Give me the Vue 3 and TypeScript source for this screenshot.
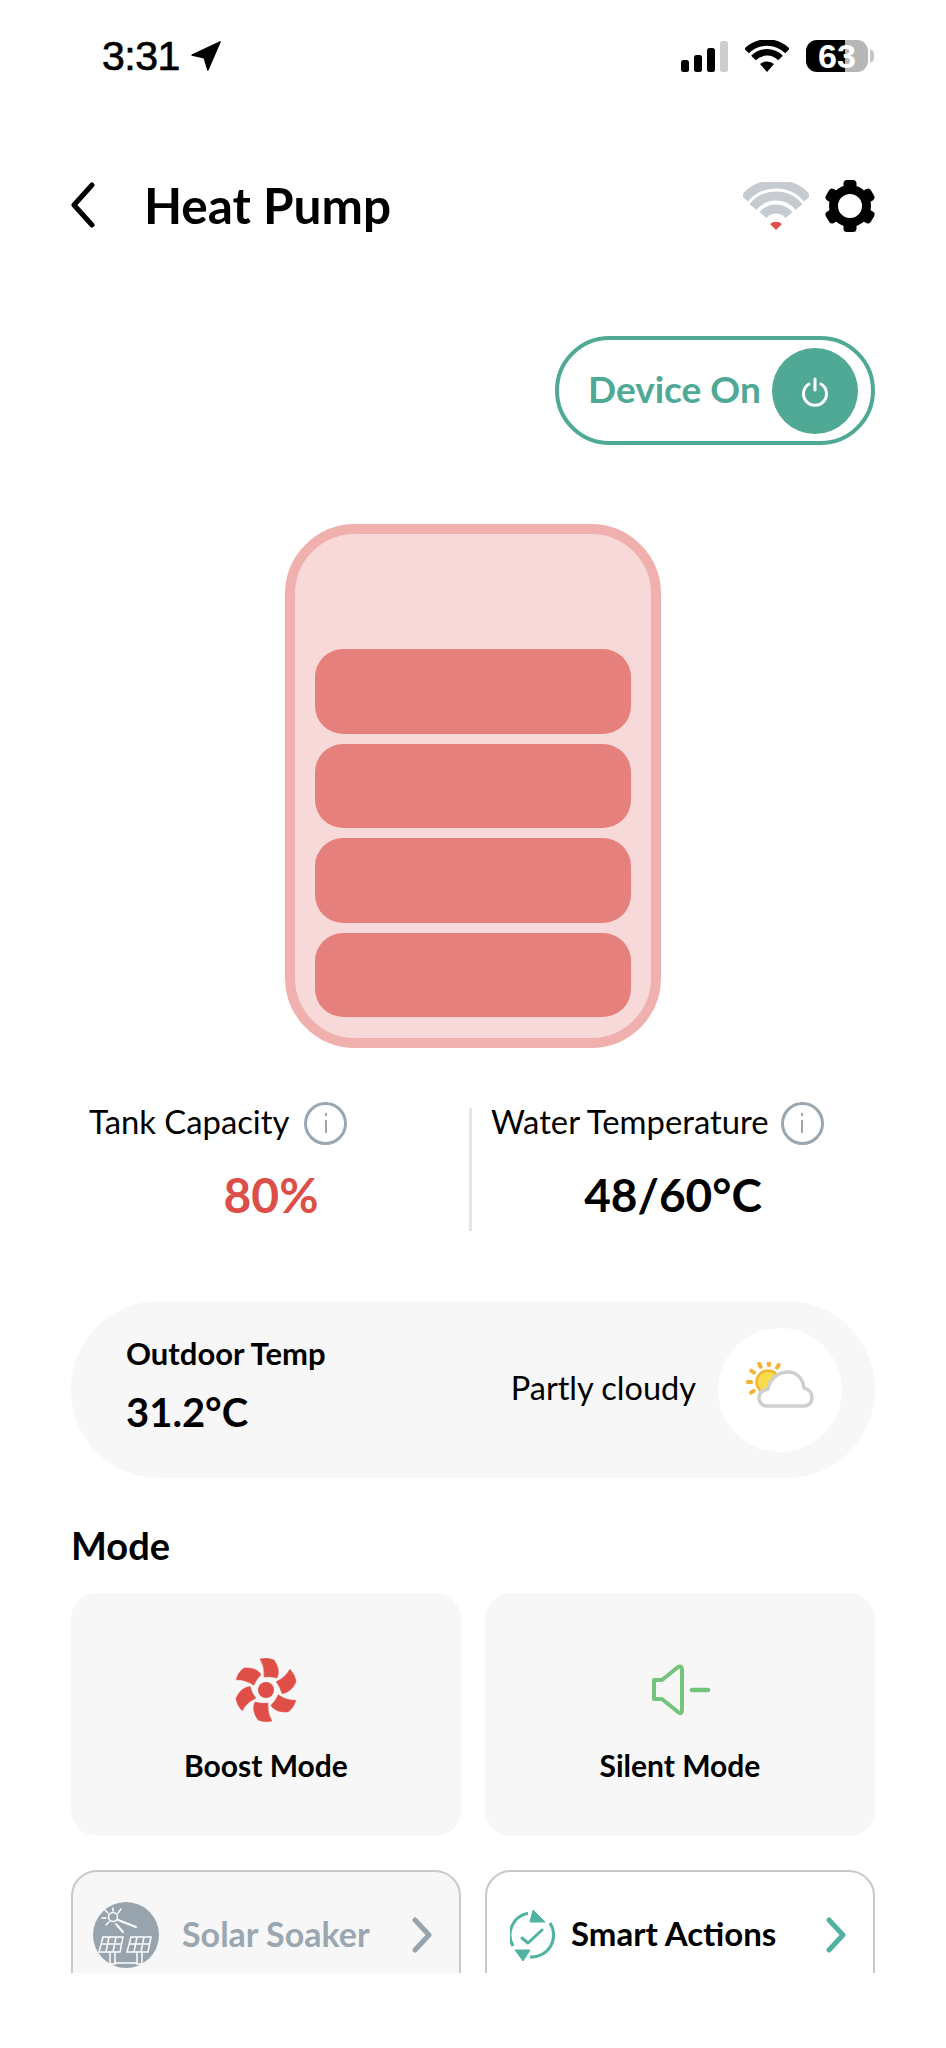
<script setup lang="ts">
const tankBars = [1, 2, 3, 4];
const gearAngles = [0, 60, 120, 180, 240, 300];
const fanAngles = [0, 60, 120, 180, 240, 300];
const sunRays = [-122, -90, -56, -26, 3, 32];
</script>

<template>
  <div class="page">
    <div class="status">
      <div class="status-left">
        <span class="time">3:31</span>
        <svg class="loc" width="30" height="32" viewBox="0 0 32 32">
          <path d="M31 1 L1 15 L14 18 L18 31 Z" fill="#000" stroke="#000" stroke-width="1.5" stroke-linejoin="round" />
        </svg>
      </div>
      <div class="status-right">
        <div class="signal">
          <i class="b1"></i><i class="b2"></i><i class="b3"></i><i class="b4"></i>
        </div>
        <svg width="44" height="32" viewBox="0 0 44 32">
          <path d="M1.5 11 A29 29 0 0 1 42.500 11" fill="none" stroke="#000" stroke-width="6.500" />
          <path d="M8.500 18 A19 19 0 0 1 35.500 18" fill="none" stroke="#000" stroke-width="6.500" />
          <path d="M15 24 L22 32 L29 24 A11 11 0 0 0 15 24 Z" fill="#000" />
        </svg>
        <div class="battery-wrap">
          <div class="battery">63</div>
          <div class="battery-cap"></div>
        </div>
      </div>
    </div>

    <div class="header">
      <svg class="back" width="24" height="46" viewBox="0 0 24 46">
        <path d="M21 3 L3 23 L21 43" fill="none" stroke="#000" stroke-width="5" stroke-linecap="round" stroke-linejoin="round" />
      </svg>
      <h1 class="title">Heat Pump</h1>
      <svg class="wifi" width="66" height="48" viewBox="0 0 66 48">
        <path d="M1.500 16.500 A41.500 41.500 0 0 1 64.500 16.500" fill="none" stroke="#c5cbd1" stroke-width="9" />
        <path d="M10 25 A29.500 29.500 0 0 1 56 25" fill="none" stroke="#c5cbd1" stroke-width="9" />
        <path d="M20 33 A17 17 0 0 1 46 33" fill="none" stroke="#c5cbd1" stroke-width="9" />
        <path d="M27 42 A9 9 0 0 1 39 42 L33 48 Z" fill="#e0504a" />
      </svg>
      <svg class="gear" width="52" height="52" viewBox="-26 -26 52 52">
        <circle r="16.500" fill="none" stroke="#000" stroke-width="9" />
        <rect
          v-for="a in gearAngles"
          :key="a"
          x="-6.500"
          y="-26"
          width="13"
          height="12"
          rx="3.500"
          fill="#000"
          :transform="`rotate(${a})`"
        />
      </svg>
    </div>

    <div class="toggle-row">
      <div class="toggle">
        <span class="toggle-label">Device On</span>
        <div class="knob">
          <svg width="32" height="32" viewBox="0 0 32 32">
            <path d="M10 9 A11.500 11.500 0 1 0 22 9" fill="none" stroke="#fff" stroke-width="3" stroke-linecap="round" />
            <path d="M16 4 V15" fill="none" stroke="#fff" stroke-width="3" stroke-linecap="round" />
          </svg>
        </div>
      </div>
    </div>

    <div class="tank">
      <div v-for="b in tankBars" :key="b" class="tank-bar"></div>
    </div>

    <div class="stats">
      <div class="stat">
        <div class="stat-head wide-gap">
          <span>Tank Capacity</span>
          <span class="info"><i></i></span>
        </div>
        <div class="stat-value red">80%</div>
      </div>
      <div class="divider"></div>
      <div class="stat">
        <div class="stat-head">
          <span>Water Temperature</span>
          <span class="info"><i></i></span>
        </div>
        <div class="stat-value">48/60°C</div>
      </div>
    </div>

    <div class="outdoor">
      <div class="outdoor-left">
        <div class="outdoor-label">Outdoor Temp</div>
        <div class="outdoor-temp">31.2°C</div>
      </div>
      <div class="outdoor-right">
        <span class="outdoor-desc">Partly cloudy</span>
        <div class="weather-circle">
          <svg width="72" height="56" viewBox="0 0 72 56">
            <g transform="translate(24 20)">
              <rect
                v-for="r in sunRays"
                :key="r"
                x="-2"
                y="-22"
                width="4"
                height="7"
                rx="1.500"
                fill="#f5b335"
                :transform="`rotate(${r})`"
              />
              <circle r="11.500" fill="#f9dc4c" stroke="#f5b335" stroke-width="2.500" />
            </g>
            <path
              d="M23 44 C17 44 15 39 15 36 C15 31 19 28 24 27 C26 16 35 10 44 10 C53 10 59 17 60 26 C65 27 68 31 68 36 C68 41 64 44 60 44 Z"
              fill="#fff"
              stroke="#cfcfcf"
              stroke-width="3.500"
              stroke-linejoin="round"
            />
          </svg>
        </div>
      </div>
    </div>

    <h2 class="section">Mode</h2>
    <div class="modes">
      <div class="mode-card">
        <svg width="62" height="64" viewBox="-31 -32 62 64">
          <g v-for="a in fanAngles" :key="a" :transform="`rotate(${a})`">
            <path d="M-6 -31 Q2 -33 8 -30 Q15 -20 11 -12 Q4 -14 -2 -13 Q-1 -23 -6 -31 Z" fill="#e04f47" stroke="#e04f47" stroke-width="0.500" stroke-linejoin="round" />
          </g>
          <circle r="8" fill="#e04f47" />
        </svg>
        <span class="mode-label">Boost Mode</span>
      </div>
      <div class="mode-card">
        <svg width="62" height="64" viewBox="0 0 62 64">
          <path d="M5 22 H13 L29 9 Q33 7 33 12 V52 Q33 57 29 54 L13 41 H5 Z" fill="none" stroke="#74c47c" stroke-width="4" stroke-linejoin="round" />
          <path d="M43 32 H59" fill="none" stroke="#74c47c" stroke-width="4.500" stroke-linecap="round" />
        </svg>
        <span class="mode-label">Silent Mode</span>
      </div>
    </div>

    <div class="actions">
      <div class="action action-off">
        <svg class="solar" width="66" height="66" viewBox="0 0 66 66">
          <circle cx="33" cy="33" r="33" fill="#97a4ae" />
          <g stroke="#fff" stroke-width="1.500" fill="none" stroke-linecap="round">
            <circle cx="20" cy="15" r="4.500" />
            <path d="M20 6 V9 M12 8 L15 11 M9 16 H13 M13 23 L16 20 M28 7 L25 11" />
            <path d="M25 18 L43 25 M23 22 L30 30" stroke-width="2" />
            <path d="M10 35 H30 L27 50 H6 Z M9 42 H28 M16 35 L13 50 M23 35 L20 50" />
            <path d="M38 35 H58 L55 50 H34 Z M37 42 H56 M44 35 L41 50 M51 35 L48 50" />
            <path d="M17 50 V62 H22 V50 M44 50 V62 H49 V50 M22 61 H44" />
          </g>
        </svg>
        <span class="action-label">Solar Soaker</span>
        <svg class="chev" width="22" height="36" viewBox="0 0 22 36">
          <path d="M4 3 L18 18 L4 33" fill="none" stroke="#97a4ae" stroke-width="5" stroke-linecap="round" stroke-linejoin="round" />
        </svg>
      </div>
      <div class="action action-on">
        <svg class="smart" width="46" height="54" viewBox="0 0 46 54">
          <path d="M18 5.300 A22 22 0 0 0 3 38" fill="none" stroke="#4fb3a0" stroke-width="3" />
          <path d="M20 49 A22 22 0 0 0 40 15" fill="none" stroke="#4fb3a0" stroke-width="3" />
          <path d="M23 2 L35 14 L20 14 Z" fill="#4fb3a0" stroke="#4fb3a0" stroke-linejoin="round" />
          <path d="M5 42 L20 42 L13 53 Z" fill="#4fb3a0" stroke="#4fb3a0" stroke-linejoin="round" />
          <path d="M12 30 L18 35 L32 22" fill="none" stroke="#4fb3a0" stroke-width="3" stroke-linecap="round" stroke-linejoin="round" />
        </svg>
        <span class="action-label on">Smart Actions</span>
        <svg class="chev" width="22" height="36" viewBox="0 0 22 36">
          <path d="M4 3 L18 18 L4 33" fill="none" stroke="#4fb3a0" stroke-width="5" stroke-linecap="round" stroke-linejoin="round" />
        </svg>
      </div>
    </div>
  </div>
</template>

<style scoped>
.page {
  width: 946px;
  height: 2048px;
  overflow: hidden;
  background: #fff;
  box-sizing: border-box;
  padding: 0 71px;
  font-family: Lato, "Open Sans", sans-serif;
  color: #000;
}

.status {
  display: flex;
  justify-content: space-between;
  align-items: center;
  height: 34px;
  margin-top: 39px;
  padding-right: 1px;
}

.status-left {
  display: flex;
  align-items: center;
  gap: 11px;
  padding-left: 31px;
}

.time {
  font-family: "Liberation Sans", sans-serif;
  font-size: 41px;
  line-height: 34px;
  letter-spacing: -0.5px;
  -webkit-text-stroke: 0.7px #000;
}

.status-right {
  display: flex;
  align-items: center;
  gap: 17px;
}

.signal {
  display: flex;
  align-items: flex-end;
  gap: 5px;
  height: 32px;
}

.signal i {
  display: block;
  width: 8px;
  border-radius: 2.5px;
  background: #000;
}

.signal .b1 { height: 12px; }
.signal .b2 { height: 17px; }
.signal .b3 { height: 24px; }
.signal .b4 { height: 31px; background: #cdcdcd; }

.battery-wrap {
  display: flex;
  align-items: center;
  gap: 2px;
}

.battery {
  width: 62px;
  height: 32px;
  border-radius: 11px;
  background: linear-gradient(90deg, #000 63%, #b6b6b6 63%);
  color: #fff;
  font-family: "Liberation Sans", sans-serif;
  font-weight: 700;
  font-size: 34px;
  line-height: 32px;
  text-align: center;
}

.battery-cap {
  width: 4px;
  height: 12px;
  border-radius: 0 4px 4px 0;
  background: #c4c4c4;
}

.header {
  display: flex;
  align-items: center;
  height: 52px;
  margin-top: 106px;
}

.back {
  flex: none;
}

.title {
  flex: 1;
  margin: 0 0 0 49px;
  font-size: 49.500px;
  font-weight: 700;
  line-height: 52px;
}

.wifi {
  flex: none;
  margin: 2px 15px 0 0;
}

.gear {
  flex: none;
  margin: 2px -1px 0 0;
}

.toggle-row {
  display: flex;
  justify-content: flex-end;
  margin-top: 105px;
}

.toggle {
  display: flex;
  align-items: center;
  justify-content: space-between;
  box-sizing: border-box;
  width: 320px;
  height: 109px;
  padding: 0 13px 0 29px;
  border: 4px solid #4fa994;
  border-radius: 55px;
}

.toggle-label {
  padding-bottom: 4px;
  font-size: 37px;
  font-weight: 700;
  color: #4fa994;
}

.knob {
  display: flex;
  align-items: center;
  justify-content: center;
  width: 86px;
  height: 86px;
  border-radius: 50%;
  background: #4fa994;
}

.tank {
  display: flex;
  flex-direction: column;
  justify-content: flex-end;
  gap: 10px;
  box-sizing: border-box;
  width: 376px;
  height: 524px;
  margin: 79px auto 0;
  padding: 0 20px 21px;
  border: 10px solid #f0b0ae;
  border-radius: 70px;
  background: #f7d9d9;
}

.tank-bar {
  height: 84.500px;
  border-radius: 28px;
  background: #e6807c;
}

.stats {
  display: flex;
  height: 123px;
  margin-top: 60px;
  padding-left: 18px;
}

.stat {
  width: 364px;
  flex: none;
}

.stat-head {
  display: flex;
  align-items: center;
  gap: 12px;
  height: 44px;
  margin-top: -7px;
  font-size: 32.800px;
}

.stat-head.wide-gap {
  gap: 15px;
}

.stat-head span:first-child {
  padding-bottom: 4px;
}

.info {
  display: flex;
  align-items: center;
  justify-content: center;
  box-sizing: border-box;
  width: 43px;
  height: 43px;
  border: 3px solid #9aa7b1;
  border-radius: 50%;
}

.info i {
  display: block;
  width: 2px;
  height: 20px;
  background: linear-gradient(#9aa7b1 3px, transparent 3px, transparent 7px, #9aa7b1 7px);
}

.stat-value {
  margin-top: 22px;
  font-size: 46px;
  font-weight: 700;
  line-height: 56px;
  text-align: center;
}

.red {
  font-size: 48px;
  color: #dc4f48;
}

.divider {
  flex: none;
  width: 3px;
  height: 123px;
  margin: 0 19px 0 16px;
  background: #e3e6e8;
}

.outdoor {
  display: flex;
  align-items: center;
  justify-content: space-between;
  box-sizing: border-box;
  height: 177px;
  margin-top: 70px;
  padding: 0 33px 0 55px;
  border-radius: 88px;
  background: #f7f7f7;
}

.outdoor-left {
  padding-bottom: 8px;
}

.outdoor-label {
  font-size: 31px;
  font-weight: 700;
  line-height: 36px;
}

.outdoor-temp {
  margin-top: 16px;
  font-size: 40px;
  font-weight: 700;
  line-height: 50px;
}

.outdoor-right {
  display: flex;
  align-items: center;
  gap: 22px;
}

.outdoor-desc {
  padding-bottom: 4px;
  font-size: 32.500px;
}

.weather-circle {
  display: flex;
  align-items: center;
  justify-content: center;
  width: 124px;
  height: 124px;
  border-radius: 50%;
  background: #fff;
}

.section {
  margin: 45px 0 0;
  font-size: 38px;
  font-weight: 700;
  line-height: 44px;
}

.modes {
  display: grid;
  grid-template-columns: 1fr 1fr;
  gap: 24px;
  margin-top: 26px;
}

.mode-card {
  display: flex;
  flex-direction: column;
  align-items: center;
  box-sizing: border-box;
  height: 243px;
  padding-top: 65px;
  border-radius: 26px;
  background: #f7f7f7;
}

.mode-label {
  margin-top: 25px;
  font-size: 30px;
  font-weight: 700;
  line-height: 36px;
}

.actions {
  display: grid;
  grid-template-columns: 1fr 1fr;
  gap: 24px;
  height: 103px;
  margin-top: 34px;
  overflow: hidden;
}

.action {
  display: flex;
  align-items: center;
  box-sizing: border-box;
  height: 130px;
  padding: 0 26px 0 24px;
  border: 2px solid #c9c9c9;
  border-radius: 26px;
  background: #fff;
}

.action-off {
  padding-left: 20px;
  background: #f7f7f7;
}

.action-on {
  padding-left: 23px;
}

.solar {
  flex: none;
}

.smart {
  flex: none;
}

.action-label {
  flex: 1;
  margin-left: 23px;
  padding-bottom: 4px;
  font-size: 34px;
  font-weight: 700;
  color: #9aa7b1;
}

.action-label.on {
  margin-left: 15px;
  font-size: 33px;
  color: #000;
}

.chev {
  flex: none;
}
</style>
